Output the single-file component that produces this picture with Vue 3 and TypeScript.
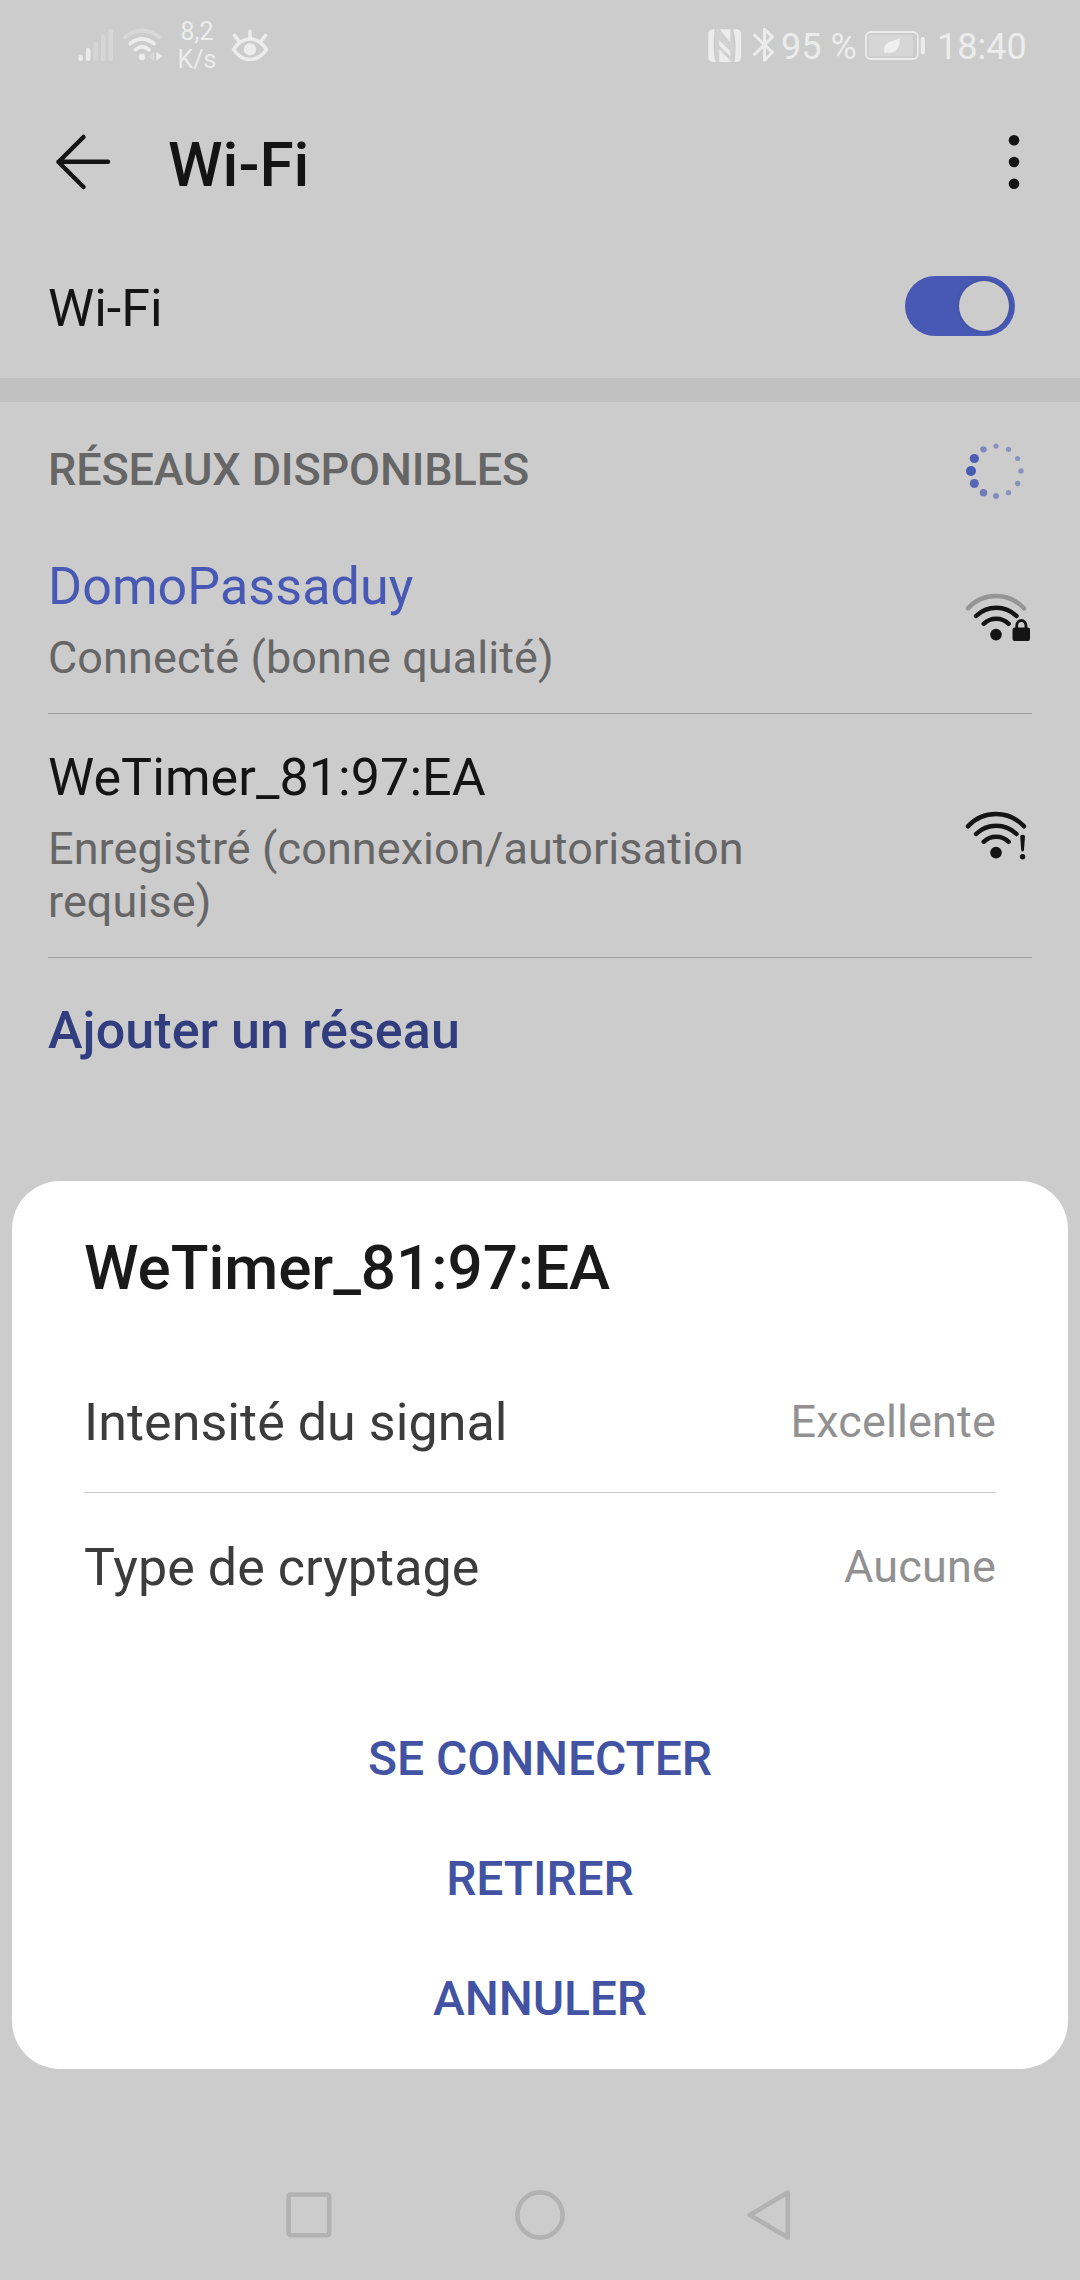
<script setup lang="ts">
interface Network {
  name: string
  status: string
  active: boolean
  locked: boolean
}

interface Dot {
  x: number
  y: number
  r: number
  o: number
}

const networks: Network[] = [
  { name: 'DomoPassaduy', status: 'Connecté (bonne qualité)', active: true, locked: true },
  { name: 'WeTimer_81:97:EA', status: 'Enregistré (connexion/autorisation requise)', active: false, locked: false },
]

const details = [
  { label: 'Intensité du signal', value: 'Excellente' },
  { label: 'Type de cryptage', value: 'Aucune' },
]

const actions = ['SE CONNECTER', 'RETIRER', 'ANNULER']

// Twelve dots, clockwise from the right-hand side
const sizes: [number, number][] = [
  [2.7, 0.5], [2.7, 0.5], [2.7, 0.5], [3, 0.55], [3.7, 0.7], [4.5, 0.88],
  [5, 1], [4.6, 0.97], [3.2, 0.6], [2.6, 0.5], [2.6, 0.5], [2.6, 0.5],
]
const dots: Dot[] = sizes.map(([r, o], i) => ({
  x: 30 + 25 * Math.cos((i * Math.PI) / 6),
  y: 30 + 25 * Math.sin((i * Math.PI) / 6),
  r,
  o,
}))
</script>

<template>
  <div class="screen">
    <header class="status">
      <svg class="signal" width="36" height="34" viewBox="0 0 36 34" stroke-width="4.6" stroke-linecap="round">
        <path d="M2.6 29.2v1.5M10.2 22.4v8.3" stroke="#ebebeb" />
        <path d="M17.7 16v14.7M25.3 9v21.7M32.7 3v27.7" stroke="#d6d6d6" />
      </svg>
      <svg class="data" width="40" height="34" viewBox="0 0 40 34" fill="none" stroke-width="3.8" stroke-linecap="round">
        <path d="M3 9Q20 -4 37 9" stroke="#d8d8d8" />
        <path d="M8.3 15.5Q20 6.5 32 15.5M13.5 21.7Q20 15.7 27 21.7" stroke="#ececec" />
        <circle cx="20" cy="29" r="3.3" fill="#ececec" />
        <path d="M32.2 24v9L26 29z" fill="#dadada" />
        <path d="M34.3 24v9L40.5 28z" fill="#ececec" />
      </svg>
      <div class="rate"><span>8,2</span><span>K/s</span></div>
      <svg class="eye" width="38" height="34" viewBox="0 0 38 34" fill="none" stroke="#ececec" stroke-width="3.6" stroke-linecap="round">
        <path d="M2.5 20.5Q9.5 10 19 10T35.5 20.5Q28.5 30.5 19 30.5T2.5 20.5Z" stroke-linejoin="round" />
        <path d="M3.6 6.5l3.8 5M19 2.3V9M34.4 6.5l-3.8 5" />
        <circle cx="19" cy="20.4" r="6.2" fill="#ececec" stroke="none" />
      </svg>
      <span class="spacer"></span>
      <svg class="nfc" width="34" height="34" viewBox="0 0 34 34">
        <rect x="0.3" y="0.3" width="32.8" height="32.8" rx="4.5" fill="#ececec" />
        <path d="M7.6 0.3Q6.6 6 6.6 17T9 33.1M24 0.3Q26.6 6 26.6 17T25.4 33.1" fill="none" stroke="#ccc" stroke-width="1.8" />
        <path d="M7.4 0.3H12L22.2 13.5V22L11.2 11.5V33.1H9Q7 27 7 17Z" fill="#ccc" opacity="0.85" />
        <path d="M11.2 16.5L22.2 27V0.3H24Q26.6 6 26.6 17T25.4 33.1H23.5L11.2 20Z" fill="#ccc" opacity="0.85" />
      </svg>
      <svg class="bt" width="24" height="36" viewBox="0 0 24 36" fill="none" stroke="#ececec" stroke-width="3" stroke-linecap="round" stroke-linejoin="round">
        <path d="M2.5 8.2L20.5 25.3L12.5 33.3V2.3L20.5 9.8L2.5 27.3" />
      </svg>
      <span class="percent">95 %</span>
      <svg class="battery" width="62" height="30" viewBox="0 0 62 30">
        <rect x="0.9" y="1" width="52" height="27" rx="5" fill="none" stroke="#ececec" stroke-width="1.8" />
        <rect x="3.5" y="3.7" width="44.5" height="21.6" rx="1.5" fill="#d6d6d6" />
        <path d="M57.8 8v13.5" stroke="#ececec" stroke-width="4.2" stroke-linecap="round" />
        <path d="M34.5 7Q35.3 14.5 31.5 19Q27.5 23.2 21.5 21.5L30 13.5L20 22.6Q16.5 15 24 11Q31.5 8.8 34.5 7Z" fill="#f0f0f0" />
      </svg>
      <span class="clock">18:40</span>
    </header>

    <div class="appbar">
      <svg width="58" height="58" viewBox="0 0 58 58" fill="none" stroke="#141414" stroke-width="4.5" stroke-linecap="round" stroke-linejoin="round">
        <path d="M29.5 4L4.500 29L29.5 54M4.5 28.7H54" />
      </svg>
      <h1>Wi-Fi</h1>
      <svg width="12" height="56" viewBox="0 0 12 56" fill="#141414">
        <circle cx="6" cy="6.3" r="5.3" />
        <circle cx="6" cy="28" r="5.3" />
        <circle cx="6" cy="49.7" r="5.3" />
      </svg>
    </div>

    <div class="switch-row">
      <span>Wi-Fi</span>
      <div class="toggle"><i></i></div>
    </div>

    <div class="band"></div>

    <div class="section">
      <h2>RÉSEAUX DISPONIBLES</h2>
      <svg width="60" height="60" viewBox="0 0 60 60" fill="#4859b2">
        <circle v-for="(d, i) in dots" :key="i" :cx="d.x" :cy="d.y" :r="d.r" :opacity="d.o" />
      </svg>
    </div>

    <ul class="networks">
      <li v-for="n in networks" :key="n.name">
        <div class="info">
          <div class="name" :class="{ active: n.active }">{{ n.name }}</div>
          <div class="sub">{{ n.status }}</div>
        </div>
        <svg width="68" height="50" viewBox="0 0 68 50" fill="none" stroke="#141414" stroke-width="4.5" stroke-linecap="round">
          <path d="M4 15.3A38 38 0 0 1 60 15.3" :stroke="n.locked ? '#959595' : '#141414'" />
          <path d="M12 23A29 29 0 0 1 52.5 23M19.7 30.8A18 18 0 0 1 44.7 30.8" />
          <circle cx="32" cy="41.6" r="5.8" fill="#141414" stroke="none" />
          <template v-if="n.locked">
            <rect x="48.5" y="34.5" width="17.5" height="13.5" rx="2" fill="#141414" stroke="none" />
            <path d="M52.7 35v-2.5a4.6 5 0 0 1 9.2 0V35" stroke-width="2.8" />
          </template>
          <template v-else>
            <path d="M56.2 25.5a2.4 1.8 0 0 1 4.8 0L60 39a1.4 1.4 0 0 1-2.8 0Z" fill="#141414" stroke="none" />
            <circle cx="58.6" cy="45.7" r="2.7" fill="#141414" stroke="none" />
          </template>
        </svg>
      </li>
    </ul>

    <div class="add">Ajouter un réseau</div>

    <nav class="nav">
      <svg width="46" height="46" viewBox="0 0 46 46" fill="none" stroke="#b2b2b2" stroke-width="4.6">
        <rect x="2.6" y="2.5" width="40.6" height="40.8" rx="2" />
      </svg>
      <svg width="50" height="50" viewBox="0 0 50 50" fill="none" stroke="#b2b2b2" stroke-width="4.6">
        <circle cx="25" cy="25" r="22.6" />
      </svg>
      <svg width="44" height="50" viewBox="0 0 44 50" fill="none" stroke="#b2b2b2" stroke-width="4.6" stroke-linejoin="round">
        <path d="M2.8 25L40.8 2.5V47.5Z" />
      </svg>
    </nav>

    <section class="dialog">
      <h3>WeTimer_81:97:EA</h3>
      <div v-for="d in details" :key="d.label" class="detail">
        <span>{{ d.label }}</span>
        <span class="value">{{ d.value }}</span>
      </div>
      <div class="actions">
        <button v-for="a in actions" :key="a" type="button">{{ a }}</button>
      </div>
    </section>
  </div>
</template>

<style>
html,
body {
  margin: 0;
  background: #ccc;
}
</style>

<style scoped>
.screen {
  position: relative;
  display: flex;
  flex-direction: column;
  width: 1080px;
  height: 2280px;
  overflow: hidden;
  box-sizing: border-box;
  background: #ccc;
  color: #141414;
  font-family: Roboto, "Noto Sans", sans-serif;
}
svg {
  display: block;
  flex: none;
  overflow: visible;
}
h1,
h2,
h3 {
  margin: 0;
  font-weight: 500;
}
.status {
  display: flex;
  align-items: flex-start;
  height: 90px;
  padding: 0 49px 0 78px;
  box-sizing: border-box;
  color: #ececec;
  white-space: nowrap;
}
.signal {
  margin-top: 28px;
}
.data {
  margin: 28px 0 0 8px;
}
.rate {
  display: flex;
  flex-direction: column;
  align-items: center;
  width: 38px;
  margin: 18px 0 0 16px;
  font-size: 25px;
  line-height: 28px;
}
.eye {
  margin: 29px 0 0 15px;
}
.spacer {
  flex: 1;
}
.nfc {
  margin: 29px 10px 0 0;
}
.bt {
  margin: 27px 5px 0 0;
}
.percent,
.clock {
  margin-top: 25px;
  font-size: 36px;
  line-height: 44px;
}
.percent {
  width: 84px;
}
.battery {
  margin: 31px 10px 0 0;
}
.clock {
  width: 94px;
}
.appbar {
  display: flex;
  align-items: center;
  height: 144px;
  padding: 0 60px 0 54px;
}
.appbar h1 {
  flex: 1;
  margin: 6px 0 0 56px;
  font-size: 62px;
  line-height: 72px;
}
.switch-row {
  display: flex;
  align-items: center;
  justify-content: space-between;
  height: 144px;
  padding: 0 65px 0 48px;
  font-size: 52px;
}
.switch-row span {
  margin-top: 4px;
}
.toggle {
  display: flex;
  align-items: center;
  justify-content: flex-end;
  width: 110px;
  height: 60px;
  padding-right: 6px;
  box-sizing: border-box;
  border-radius: 30px;
  background: #4859b5;
}
.toggle i {
  width: 50px;
  height: 50px;
  border-radius: 50%;
  background: #ccc;
  box-shadow: 0 0 4px rgba(0, 0, 0, 0.18);
}
.band {
  height: 24px;
  background: #c1c1c1;
}
.section {
  display: flex;
  align-items: center;
  justify-content: space-between;
  height: 138px;
  padding: 0 54px 0 48px;
}
.section h2 {
  margin-top: -4px;
  color: #666;
  font-size: 45px;
  letter-spacing: -0.16px;
}
.networks {
  margin: 0 48px;
  padding: 0;
  list-style: none;
}
.networks li {
  display: flex;
  align-items: center;
  justify-content: space-between;
  padding: 17px 0 29px;
  border-bottom: 1px solid #a0a0a0;
}
.networks li + li {
  padding-top: 34px;
}
.networks svg {
  margin-top: -5px;
}
.info {
  width: 760px;
}
.name {
  font-size: 52px;
  letter-spacing: 0.08px;
  line-height: 60px;
}
.name.active {
  color: #4859b5;
}
.sub {
  margin-top: 14px;
  color: #666;
  font-size: 45px;
  letter-spacing: 0.08px;
  line-height: 53px;
}
.add {
  margin: 43px 48px 0;
  color: #313d7f;
  font-size: 52px;
  font-weight: 500;
  letter-spacing: 0.08px;
  line-height: 60px;
}
.nav {
  display: flex;
  align-items: center;
  justify-content: space-between;
  height: 130px;
  margin-top: auto;
  padding: 0 289px 0 286px;
}
.dialog {
  position: absolute;
  top: 1181px;
  left: 12px;
  width: 1056px;
  height: 888px;
  padding: 51px 72px 0;
  box-sizing: border-box;
  border-radius: 48px;
  background: #fff;
}
.dialog h3 {
  margin-bottom: 44px;
  color: #1a1a1a;
  font-size: 62px;
  letter-spacing: -0.06px;
  line-height: 72px;
}
.detail {
  display: flex;
  align-items: center;
  justify-content: space-between;
  height: 144px;
  color: #3c3c3c;
  font-size: 52px;
}
.detail + .detail {
  border-top: 1px solid #ccc;
}
.detail span {
  margin-top: 4px;
  letter-spacing: 0.06px;
}
.detail .value {
  margin-top: 2px;
  color: #919191;
  font-size: 45px;
  letter-spacing: 0.15px;
}
.actions {
  display: flex;
  flex-direction: column;
  margin-top: 61px;
}
.actions button {
  height: 120px;
  padding: 0;
  border: 0;
  background: none;
  color: #4253a3;
  font-family: inherit;
  font-size: 48px;
  font-weight: 500;
  letter-spacing: -0.1px;
}
</style>
